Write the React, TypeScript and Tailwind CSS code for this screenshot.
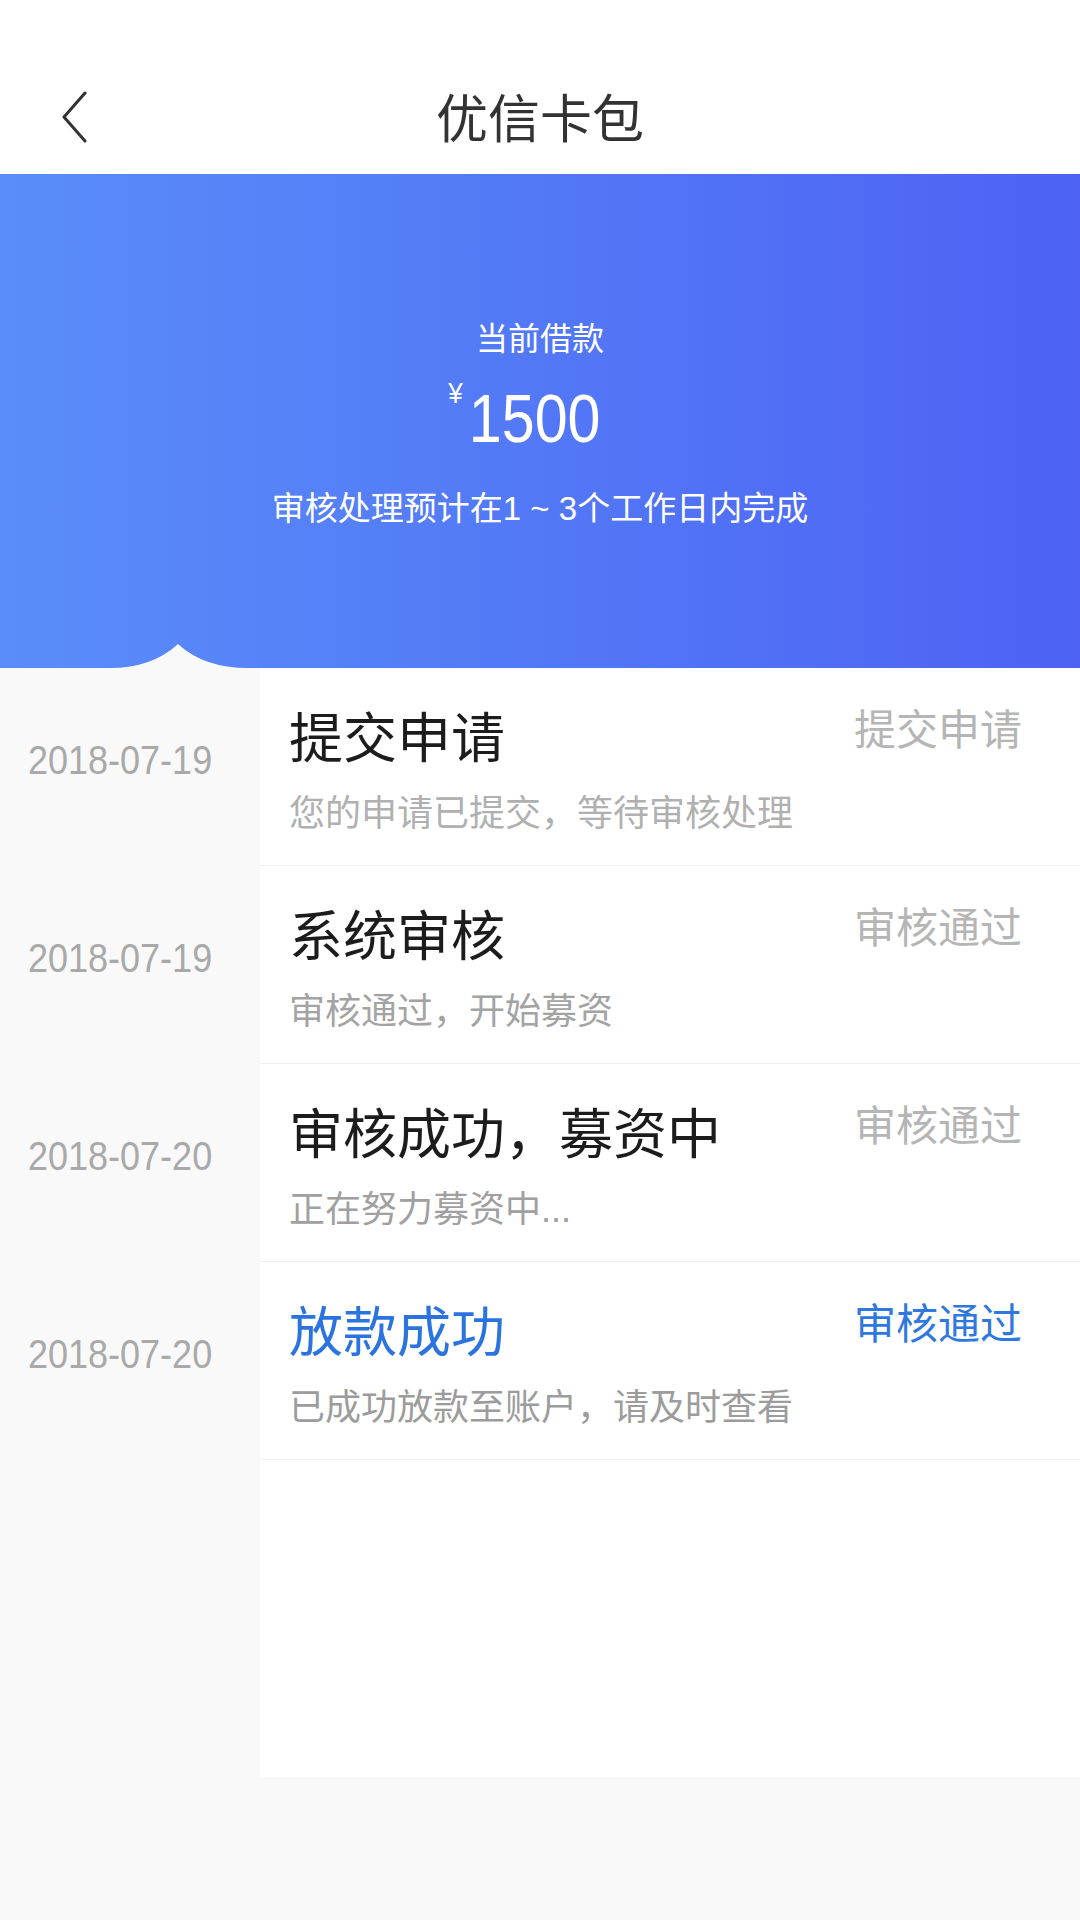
import React from "react";

const CJK = '"Liberation Sans", "Noto Sans CJK SC", sans-serif';

type Row = {
  date: string;
  title: string;
  desc: string;
  status: string;
  active?: boolean;
  descColor: string;
};

const rows: Row[] = [
  { date: "2018-07-19", title: "提交申请", desc: "您的申请已提交，等待审核处理", status: "提交申请", descColor: "text-[#b0b0b0]" },
  { date: "2018-07-19", title: "系统审核", desc: "审核通过，开始募资", status: "审核通过", descColor: "text-[#a3a3a3]" },
  { date: "2018-07-20", title: "审核成功，募资中", desc: "正在努力募资中...", status: "审核通过", descColor: "text-[#a0a0a0]" },
  { date: "2018-07-20", title: "放款成功", desc: "已成功放款至账户，请及时查看", status: "审核通过", active: true, descColor: "text-[#9c9c9c]" },
];

export default function App() {
  return (
    <div className="w-[1080px] h-[1920px] bg-[#f9f9f9] flex flex-col overflow-hidden" style={{ fontFamily: CJK }}>
      {/* Header */}
      <header className="h-[174px] bg-white relative flex justify-center items-start pt-[94px] shrink-0">
        <svg className="absolute left-[60px] top-[91px]" width="28" height="52" viewBox="0 0 28 52" fill="none">
          <path d="M25 2 L4 26 L25 50" stroke="#333333" strokeWidth="3" strokeLinecap="round" strokeLinejoin="round" />
        </svg>
        <h1 className="text-[52px] leading-none text-[#333333] font-normal">优信卡包</h1>
      </header>

      {/* Banner */}
      <section className="h-[494px] shrink-0 relative bg-gradient-to-r from-[#5a8df9] to-[#4d62f3] flex flex-col items-center text-white">
        <div className="mt-[149px] text-[32px] leading-none">当前借款</div>
        <div className="mt-[29px] mr-[11px] relative leading-none scale-x-[0.87] origin-center">
          <span className="absolute right-full top-[-6px] mr-[7px] text-[30px] leading-none">¥</span>
          <span className="text-[68px] leading-none block">1500</span>
        </div>
        <div className="mt-[40px] text-[33px] leading-none">审核处理预计在1 ~ 3个工作日内完成</div>
        <svg className="absolute bottom-0 left-[110px]" width="138" height="24" viewBox="0 0 138 24">
          <path d="M0 24 Q42 24 68 0 Q94 24 138 24 Z" fill="#f9f9f9" />
        </svg>
      </section>

      {/* Timeline */}
      <div className="flex flex-col shrink-0">
        {rows.map((r, i) => (
          <div key={i} className="flex h-[198px]">
            <div className="w-[260px] shrink-0 flex items-center pl-[28px] pb-[14px]">
              <span className="text-[40px] leading-none text-[#a9a9a9] block scale-x-[0.9] origin-left">{r.date}</span>
            </div>
            <div className="flex-1 bg-white border-b border-[#eeeeee] pl-[29px] pr-[58px] pt-[44px]">
              <div className="flex justify-between items-start">
                <span className={`text-[54px] leading-none ${r.active ? "text-[#2b74df]" : "text-[#1c1c1c]"}`}>{r.title}</span>
                <span className={`text-[42px] leading-none mt-[-2px] ${r.active ? "text-[#2f78e0]" : "text-[#b5b5b5]"}`}>{r.status}</span>
              </div>
              <div className={`mt-[30px] text-[36px] leading-none ${r.descColor}`}>{r.desc}</div>
            </div>
          </div>
        ))}
        <div className="flex h-[317px]">
          <div className="w-[260px] shrink-0" />
          <div className="flex-1 bg-white" />
        </div>
      </div>
    </div>
  );
}
